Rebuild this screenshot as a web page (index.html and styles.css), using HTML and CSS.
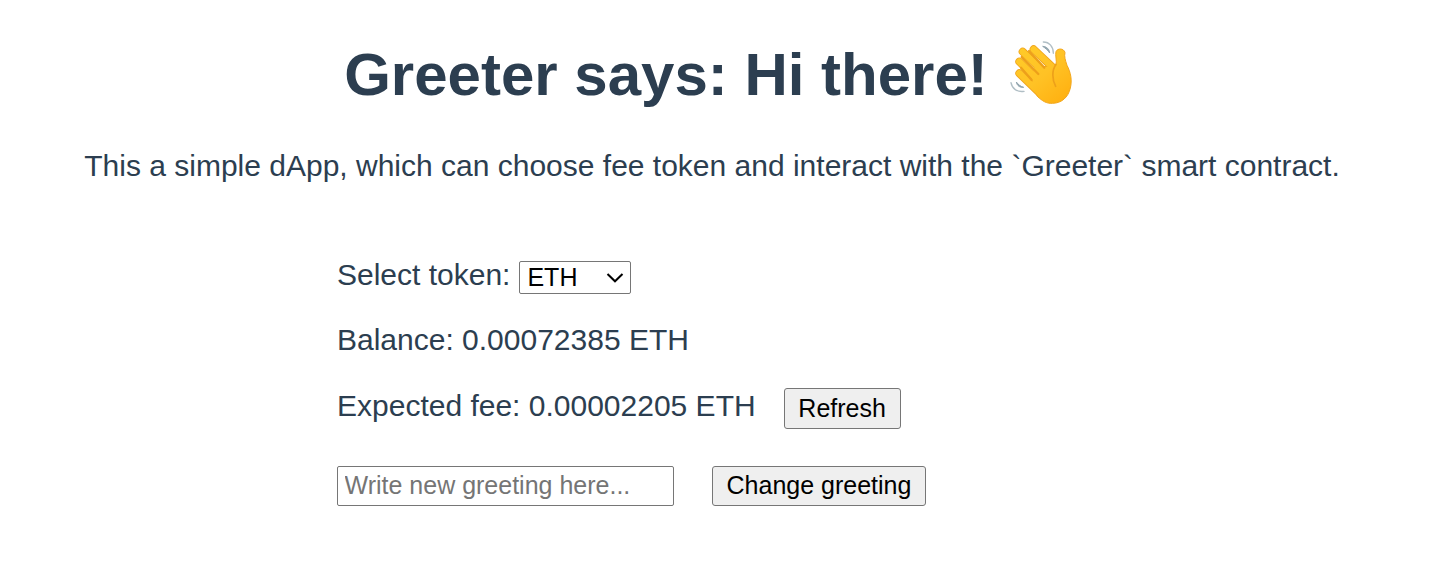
FILE: index.html
```html
<!DOCTYPE html>
<html lang="en">
<head>
<meta charset="utf-8">
<title>Greeter</title>
<link rel="stylesheet" href="styles.css">
</head>
<body>
<main class="app">
  <h1 class="title"><span>Greeter says: Hi there!</span>
    <svg class="wave" viewBox="51 27 225 216" role="img" aria-label="Waving hand">
      <defs>
        <linearGradient id="skin" gradientUnits="userSpaceOnUse" x1="90" y1="60" x2="225" y2="215">
          <stop offset="0" stop-color="#ffca28"/>
          <stop offset=".5" stop-color="#ffc225"/>
          <stop offset="1" stop-color="#ffb010"/>
        </linearGradient>
      </defs>
      <g fill="none" stroke="#f0a41d" stroke-width="24" stroke-linecap="round">
        <path d="M131 58 L190 114 M98 65 L170 134 M88 95 L150 156 M88 130 L150 190"/>
      </g>
      <path d="M198 106 C201 92 195 75 198 65 C202 54 222 54 225 68 C222 78 226 91 231 106 C242 127 247 150 241 174 C235 202 214 220 187 220 C169 221 157 213 142 199 L130 160 L160 110 Z" fill="url(#skin)" stroke="#f2a61c" stroke-width="3" stroke-linejoin="round"/>
      <g fill="none" stroke="url(#skin)" stroke-width="19" stroke-linecap="round">
        <path d="M131 58 L190 114 M98 65 L170 134 M88 95 L150 156 M88 130 L150 190"/>
      </g>
      <path d="M135 105 L190 120 L180 205 L145 190 L125 150 Z" fill="url(#skin)"/>
      <path d="M93 113 L125 150 M95 81 L145 132 M117 63 L163 113" fill="none" stroke="#eda01a" stroke-width="7" stroke-linecap="round"/>
      <path d="M198 103 C185 122 186 148 197 169" fill="none" stroke="#eda01a" stroke-width="5" stroke-linecap="round"/>
      <path d="M160 36 C178 36 190 50 190 70" fill="none" stroke="#b0bec5" stroke-width="4" stroke-linecap="round"/>
      <path d="M158 49 C170 50 178 57 179 69 C174 61 167 55 158 49Z" fill="#90a4ae" stroke="#90a4ae" stroke-width="3" stroke-linejoin="round"/>
      <path d="M63 158 C66 176 81 187 102 184" fill="none" stroke="#b0bec5" stroke-width="4" stroke-linecap="round"/>
      <path d="M79 156 C81 167 89 173 101 172 C91 169 85 164 79 156Z" fill="#90a4ae" stroke="#90a4ae" stroke-width="3" stroke-linejoin="round"/>
    </svg>
  </h1>
  <p class="intro">This a simple dApp, which can choose fee token and interact with the `Greeter` smart contract.</p>
  <section class="panel">
    <div class="row row-token">
      <label for="token">Select token:</label>
      <div class="select-box">
        <select id="token" class="control token"><option>ETH</option></select>
        <svg class="chevron" viewBox="0 0 18 12" aria-hidden="true"><path d="M1.5 2 L9 9.3 L16.5 2"/></svg>
      </div>
    </div>
    <div class="row row-balance">Balance: 0.00072385 ETH</div>
    <div class="row row-fee"><span class="fee">Expected fee: 0.00002205 ETH</span><button class="control button refresh">Refresh</button></div>
    <div class="row row-greeting"><input class="control greeting" placeholder="Write new greeting here..."><button class="control button change">Change greeting</button></div>
  </section>
</main>
</body>
</html>
```

FILE: styles.css
```css
* { box-sizing: border-box; }
body {
  margin: 0;
  background: #fff;
  color: #2c3e50;
  font: 30px/34px "Liberation Sans", Arial, sans-serif;
}
.app { width: 1424px; padding-top: 41px; }
.title {
  display: flex;
  justify-content: center;
  align-items: center;
  gap: 19px;
  height: 68px;
  margin: 0;
  font-size: 60px;
  line-height: 68px;
  white-space: nowrap;
}
.wave { width: 75px; height: 72px; margin-right: -2px; flex: none; }
.intro { margin: 40px 0 0; text-align: center; white-space: nowrap; }
.panel { margin: 75px 0 0 337px; }
.row { display: flex; align-items: flex-start; white-space: nowrap; }
.row-token { height: 65px; }
.row-balance { height: 65px; }
.row-fee { height: 78px; }
.fee { padding-top: 1px; }
.control {
  margin: 0;
  border: 1px solid #767676;
  border-radius: 2px;
  font: 25px/28px "Liberation Sans", Arial, sans-serif;
  color: #000;
}
.select-box { position: relative; margin: 3px 0 0 9px; height: 33px; }
.token {
  display: block;
  appearance: none;
  width: 112px;
  height: 33px;
  padding: 0 0 2px 7px;
  background: #fff;
}
.chevron {
  position: absolute;
  top: 11px;
  right: 7px;
  width: 18px;
  height: 12px;
  fill: none;
  stroke: #000;
  stroke-width: 2;
  pointer-events: none;
}
.button { border-radius: 3px; background: #efefef; padding: 0 0 2px; text-align: center; }
.refresh { width: 117px; height: 41px; margin-left: 28px; }
.greeting { width: 337px; height: 40px; padding: 0 7px 2px 6.5px; background: #fff; }
.greeting::placeholder { color: #757575; opacity: 1; }
.change { width: 214px; height: 40px; margin-left: 38px; }
```
